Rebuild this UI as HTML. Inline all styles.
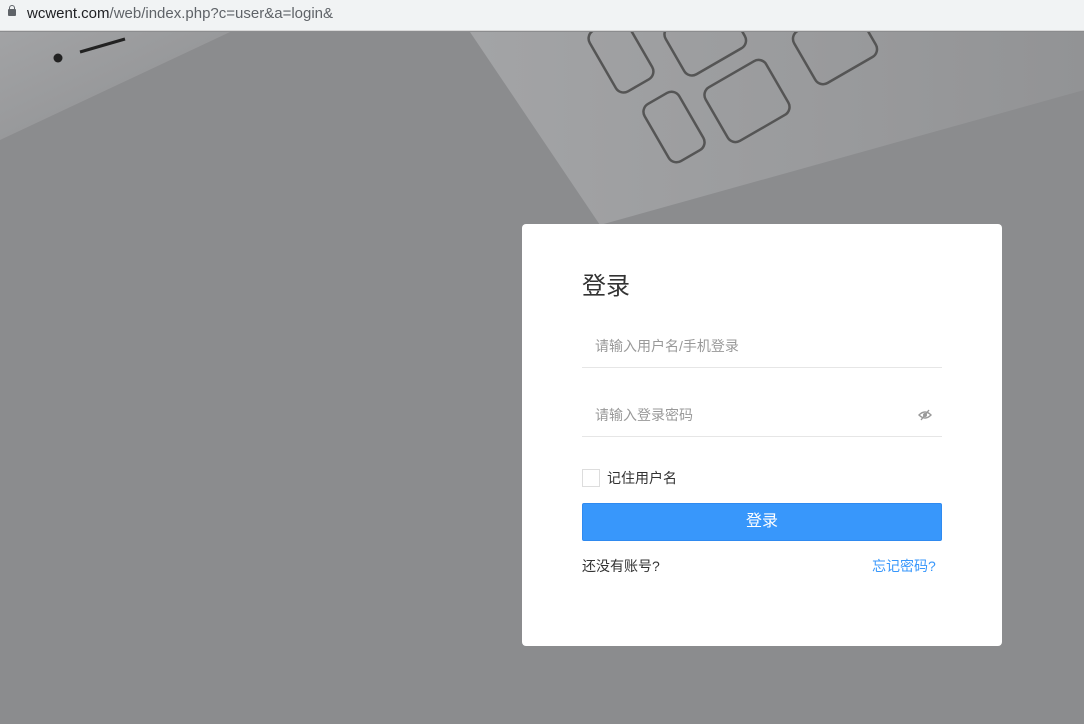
<!DOCTYPE html>
<html><head><meta charset="utf-8"><style>
*{margin:0;padding:0;box-sizing:border-box}
body{width:1084px;height:724px;overflow:hidden;font-family:"Liberation Sans","Noto Sans CJK SC",sans-serif;background:#8b8c8e;position:relative}
.bar{position:absolute;left:0;top:0;width:1084px;height:31px;background:#f1f3f4;border-bottom:1px solid #d8d8d8;font-size:15px;color:#202124;line-height:27px;padding-left:27px}
.bar span{color:#5f6368}
.lock{position:absolute;left:8px;top:9px;width:8px;height:7px;background:#5f6368;border-radius:1px}
.lock:before{content:"";position:absolute;left:1px;top:-4px;width:6px;height:6px;border:1.5px solid #5f6368;border-bottom:none;border-radius:3px 3px 0 0;box-sizing:border-box}
.bg{position:absolute;left:0;top:32px}
.card{position:absolute;left:522px;top:224px;width:480px;height:422px;background:#fff;border-radius:4px}
h1{position:absolute;left:60px;top:42px;font-size:24px;font-weight:normal;color:#333}
.in{position:absolute;left:60px;width:360px;height:44px;border-bottom:1px solid #e6e6e6;font-size:14px;color:#999;padding-left:13px;line-height:44px}
.chk{position:absolute;left:60px;top:245px;width:18px;height:18px;border:1px solid #ddd}
.rem{position:absolute;left:85px;top:244px;font-size:14px;color:#333}
.btn{position:absolute;left:60px;top:279px;width:360px;height:38px;background:#3897fb;border:1px solid #2f8af0;border-radius:2px;color:#fff;font-size:16px;text-align:center;line-height:36px}
.l{position:absolute;left:60px;top:332px;font-size:14px;color:#333}
.r{position:absolute;left:350px;top:332px;font-size:14px;color:#3897fb}
</style></head><body>
<div class="bar"><div class="lock"></div>wcwent.com<span>/web/index.php?c=user&amp;a=login&amp;</span></div>
<svg class="bg" width="1084" height="692" viewBox="0 32 1084 692">
<defs><linearGradient id="g" x1="0" y1="0" x2="1" y2="0"><stop offset="0" stop-color="#a3a4a6"/><stop offset="0.6" stop-color="#999a9c"/><stop offset="1" stop-color="#929395"/></linearGradient>
<linearGradient id="p" x1="0" y1="0" x2="1" y2="1"><stop offset="0" stop-color="#a2a3a5"/><stop offset="1" stop-color="#8e8f91"/></linearGradient></defs>
<polygon points="0,32 230,32 0,140" fill="url(#p)"/>
<polygon points="470,32 1084,32 1084,90 600,225" fill="url(#g)"/>
<g fill="none" stroke="#555" stroke-width="2.5">
<rect x="600" y="20" width="42" height="70" rx="9" transform="rotate(-30 621 55)"/>
<rect x="654" y="94" width="40" height="66" rx="9" transform="rotate(-30 674 127)"/>
<rect x="712" y="70" width="70" height="62" rx="9" transform="rotate(-30 747 101)"/>
<rect x="670" y="10" width="70" height="55" rx="9" transform="rotate(-30 705 37)"/>
<rect x="800" y="14" width="70" height="60" rx="9" transform="rotate(-30 835 44)"/>
</g>
<circle cx="58" cy="58" r="4.5" fill="#222"/>
<line x1="80" y1="52" x2="125" y2="39" stroke="#222" stroke-width="3"/>
</svg>
<div class="card">
<h1>登录</h1>
<div class="in" style="top:100px">请输入用户名/手机登录</div>
<div class="in" style="top:169px">请输入登录密码
<svg style="position:absolute;right:10px;top:16px" width="14" height="12" viewBox="0 0 14 12"><path d="M1 6Q7 0 13 6Q7 12 1 6Z" fill="none" stroke="#999" stroke-width="1.4"/><circle cx="7" cy="6" r="2" fill="#999"/><path d="M3 11L11 1" stroke="#999" stroke-width="1.4"/></svg></div>
<div class="chk"></div><div class="rem">记住用户名</div>
<div class="btn">登录</div>
<div class="l">还没有账号?</div><div class="r">忘记密码?</div>
</div>
</body></html>
